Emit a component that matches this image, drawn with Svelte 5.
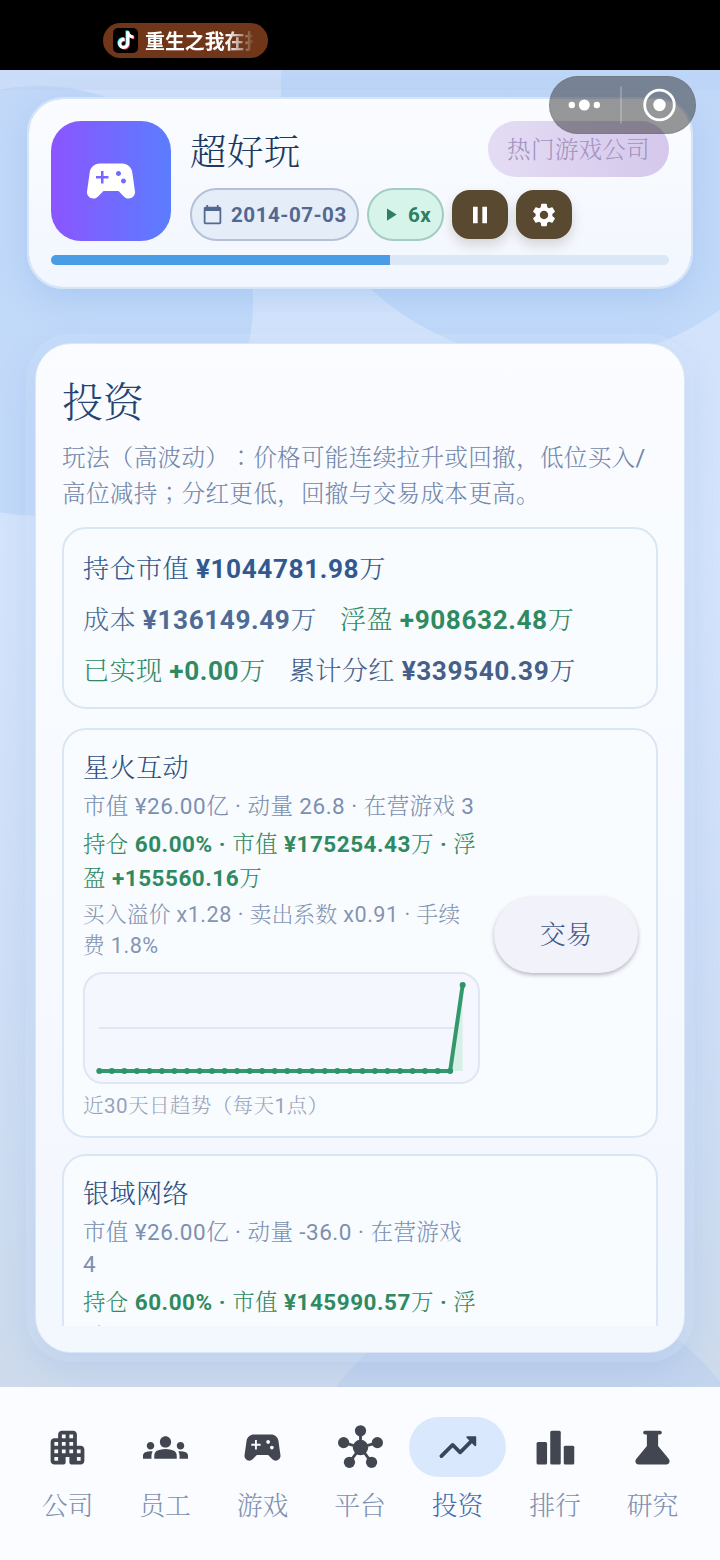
<script lang="ts">
  type Line = string;

  const progress = 54.8;

  const summary = [
    [{ label: '持仓市值', value: '¥1044781.98', tone: 'ink' }],
    [
      { label: '成本', value: '¥136149.49', tone: 'slate' },
      { label: '浮盈', value: '+908632.48', tone: 'gain' },
    ],
    [
      { label: '已实现', value: '+0.00', tone: 'gain' },
      { label: '累计分红', value: '¥339540.39', tone: 'steel' },
    ],
  ];

  const companies: { name: string; stats: Line[]; holding: Line[]; fees: Line[] }[] = [
    {
      name: '星火互动',
      stats: ['市值 ¥26.00亿 · 动量 26.8 · 在营游戏 3'],
      holding: ['持仓 60.00% · 市值 ¥175254.43万 · 浮', '盈 +155560.16万'],
      fees: ['买入溢价 x1.28 · 卖出系数 x0.91 · 手续', '费 1.8%'],
    },
    {
      name: '银域网络',
      stats: ['市值 ¥26.00亿 · 动量 -36.0 · 在营游戏', '4'],
      holding: ['持仓 60.00% · 市值 ¥145990.57万 · 浮', '盈 +126296.30万'],
      fees: ['买入溢价 x1.28 · 卖出系数 x0.91 · 手续', '费 1.8%'],
    },
  ];

  // 30 daily points, flat until today
  const points = Array.from({ length: 30 }, (_, i) => ({
    x: 14.3 + i * 12.53,
    y: i === 29 ? 11 : 97,
  }));
  const linePath = points.map((p) => `${p.x},${p.y}`).join(' ');

  const tabs = [
    { id: 'company', label: '公司' },
    { id: 'staff', label: '员工' },
    { id: 'games', label: '游戏' },
    { id: 'platform', label: '平台' },
    { id: 'invest', label: '投资' },
    { id: 'rank', label: '排行' },
    { id: 'research', label: '研究' },
  ];
  let active = $state('invest');

  const gamepad =
    'M21.58 16.09l-1.09-7.66C20.21 6.46 18.52 5 16.53 5H7.47C5.48 5 3.79 6.46 3.51 8.43l-1.09 7.66C2.2 17.63 3.39 19 4.94 19c.68 0 1.32-.27 1.8-.75L9 16h6l2.25 2.25c.48.48 1.13.75 1.8.75 1.56 0 2.75-1.37 2.53-2.91zM11 11H9v2H8v-2H6v-1h2V8h1v2h2v1zm4-1c-.55 0-1-.45-1-1s.45-1 1-1 1 .45 1 1-.45 1-1 1zm2 3c-.55 0-1-.45-1-1s.45-1 1-1 1 .45 1 1-.45 1-1 1z';
  const note =
    'M12.525.02c1.31-.02 2.61-.01 3.91-.02.08 1.53.63 3.09 1.75 4.17 1.12 1.11 2.7 1.62 4.24 1.79v4.03c-1.44-.05-2.89-.35-4.2-.97-.57-.26-1.1-.59-1.62-.93-.01 2.92.01 5.84-.02 8.75-.08 1.4-.54 2.79-1.35 3.94-1.31 1.92-3.58 3.17-5.91 3.21-1.43.08-2.86-.31-4.08-1.03-2.02-1.19-3.44-3.37-3.65-5.71-.02-.5-.03-1-.01-1.49.18-1.9 1.12-3.72 2.58-4.96 1.66-1.44 3.98-2.13 6.15-1.72.02 1.48-.04 2.96-.04 4.44-.99-.32-2.15-.23-3.02.37-.63.41-1.11 1.04-1.36 1.75-.21.51-.15 1.07-.14 1.61.24 1.64 1.82 3.02 3.5 2.87 1.12-.01 2.19-.66 2.77-1.61.19-.33.4-.67.41-1.06.1-1.79.06-3.57.07-5.36.01-4.03-.01-8.05.02-12.07z';

  // keeps Han runs light while latin digits follow the paragraph weight
  function runs(text: string) {
    return text.split(/([：；]|[\u3000-\u9fff\uff00-\uff19\uff1c-\uffef]+)/).filter(Boolean).map((t) => ({
      t,
      kind: /[：；]/.test(t) ? 'stop' : /[\u3000-\u9fff\uff00-\uffef]/.test(t) ? 'han' : 'latin',
    }));
  }
</script>

{#snippet mixed(lines: string[])}
  {#each lines as line}
    <span class="line">{#each runs(line) as r}<span class={r.kind}>{r.t}</span>{/each}</span>
  {/each}
{/snippet}

<div class="screen">
  <svg class="backdrop" viewBox="0 0 720 1560" aria-hidden="true">
    <circle class="blob" cx="38" cy="301" r="215" />
    <circle class="blob" cx="558" cy="85" r="277" />
    <circle class="blob low" cx="530" cy="1530" r="241" />
    <rect class="strip" x="0" y="70" width="720" height="20" />
  </svg>

  <div class="statusbar">
    <div class="live">
      <svg class="app" viewBox="0 0 25 25">
        <rect width="25" height="25" rx="5" fill="#000" />
        <g transform="translate(4 3.2) scale(.74)">
          <path d={note} fill="#25f4ee" transform="translate(-1 -.8)" />
          <path d={note} fill="#fe2c55" transform="translate(1 .8)" />
          <path d={note} fill="#fff" />
        </g>
      </svg>
      <span class="live-text">重生之我在打</span>
    </div>
  </div>

  <div class="capsule">
    <svg viewBox="0 0 147 58">
      <g fill="#fff">
        <circle cx="22.8" cy="29" r="3.2" />
        <circle cx="35.3" cy="29" r="5.5" />
        <circle cx="47.8" cy="29" r="3.2" />
        <circle cx="110.5" cy="29" r="6.2" />
      </g>
      <path d="M72 10.5v37" stroke="#fff" stroke-opacity=".28" stroke-width="1.6" />
      <circle cx="110.5" cy="29" r="14.8" fill="none" stroke="#fff" stroke-width="2.8" />
    </svg>
  </div>

  <header class="topcard">
    <div class="top-main">
      <div class="logo"><svg viewBox="0 0 24 24"><path d={gamepad} /></svg></div>
      <div class="info">
        <div class="name-row">
          <h1>超好玩</h1>
          <span class="tag">热门游戏公司</span>
        </div>
        <div class="chips">
          <span class="chip date">
            <svg viewBox="0 0 24 24"><path fill-rule="evenodd" d="M20 3h-1V1h-2v2H7V1H5v2H4c-1.1 0-2 .9-2 2v16c0 1.1.9 2 2 2h16c1.1 0 2-.9 2-2V5c0-1.1-.9-2-2-2zm0 18H4V8h16v13z" /></svg>
            2014-07-03
          </span>
          <span class="chip speed">
            <svg viewBox="0 0 24 24"><path d="M8 5v14l11-7z" /></svg>
            6x
          </span>
          <button class="ctl" aria-label="暂停"><svg viewBox="0 0 24 24"><path d="M6 19h4V5H6v14zm8-14v14h4V5h-4z" /></svg></button>
          <button class="ctl" aria-label="设置"><svg viewBox="0 0 24 24"><path d="M19.14 12.94c.04-.3.06-.61.06-.94 0-.32-.02-.64-.07-.94l2.03-1.58c.18-.14.23-.41.12-.61l-1.92-3.32c-.12-.22-.37-.29-.59-.22l-2.39.96c-.5-.38-1.03-.7-1.62-.94l-.36-2.54c-.04-.24-.24-.41-.48-.41h-3.84c-.24 0-.43.17-.47.41l-.36 2.54c-.59.24-1.13.57-1.62.94l-2.39-.96c-.22-.08-.47 0-.59.22L2.74 8.87c-.12.21-.08.47.12.61l2.03 1.58c-.05.3-.09.63-.09.94s.02.64.07.94l-2.03 1.58c-.18.14-.23.41-.12.61l1.92 3.32c.12.22.37.29.59.22l2.39-.96c.5.38 1.03.7 1.62.94l.36 2.54c.05.24.24.41.48.41h3.84c.24 0 .44-.17.47-.41l.36-2.54c.59-.24 1.13-.56 1.62-.94l2.39.96c.22.08.47 0 .59-.22l1.92-3.32c.12-.22.07-.47-.12-.61l-2.01-1.58zM12 15.6c-1.98 0-3.6-1.62-3.6-3.6s1.62-3.6 3.6-3.6 3.6 1.62 3.6 3.6-1.62 3.6-3.6 3.6z" /></svg></button>
        </div>
      </div>
    </div>
    <div class="track"><div class="bar" style="width: {progress}%"></div></div>
  </header>

  <main class="panel">
    <div class="scroll">
      <h2>投资</h2>
      <p class="hint">{@render mixed(['玩法（高波动）：价格可能连续拉升或回撤，低位买入/', '高位减持；分红更低，回撤与交易成本更高。'])}</p>

      <section class="box summary">
        {#each summary as row}
          <div class="sum-row">
            {#each row as item}
              <span class={item.tone}>{item.label} <b>{item.value}</b>万</span>
            {/each}
          </div>
        {/each}
      </section>

      {#each companies as c}
        <section class="box company">
          <div class="detail">
            <h3>{c.name}</h3>
            <p class="stats">{@render mixed(c.stats)}</p>
            <p class="holding">{@render mixed(c.holding)}</p>
            <p class="fees">{@render mixed(c.fees)}</p>
            <div class="chart">
              <svg viewBox="0 0 393 108">
                <path class="mid" d="M14 54H378" />
                <polygon class="area" points="{linePath} 377.7,97 14.3,97" />
                <polyline class="trend" points={linePath} />
                {#each points as p}<circle cx={p.x} cy={p.y} r="3" />{/each}
              </svg>
            </div>
            <p class="caption">{@render mixed(['近30天日趋势（每天1点）'])}</p>
          </div>
          <button class="trade">交易</button>
        </section>
      {/each}
    </div>
  </main>

  <nav>
    {#each tabs as tab}
      <button class="tab" class:active={active === tab.id} onclick={() => (active = tab.id)}>
        <span class="pill">
          <svg viewBox="0 0 24 24">
            {#if tab.id === 'company'}
              <path d="M17 11V5c0-1.1-.9-2-2-2H9c-1.1 0-2 .9-2 2v2H5c-1.1 0-2 .9-2 2v10c0 1.1.9 2 2 2h5c.55 0 1-.45 1-1v-3h2v3c0 .55.45 1 1 1h5c1.1 0 2-.9 2-2v-6c0-1.1-.9-2-2-2h-2zM7 19H5v-2h2v2zm0-4H5v-2h2v2zm0-4H5V9h2v2zm4 4H9v-2h2v2zm0-4H9V9h2v2zm0-4H9V5h2v2zm4 8h-2v-2h2v2zm0-4h-2V9h2v2zm0-4h-2V5h2v2zm4 12h-2v-2h2v2zm0-4h-2v-2h2v2z" />
            {:else if tab.id === 'staff'}
              <path d="M12 12.75c1.63 0 3.07.39 4.24.9 1.08.48 1.76 1.56 1.76 2.73V18H6v-1.61c0-1.18.68-2.26 1.76-2.73 1.17-.52 2.61-.91 4.24-.91zM4 13c1.1 0 2-.9 2-2s-.9-2-2-2-2 .9-2 2 .9 2 2 2zm1.13 1.1c-.37-.06-.74-.1-1.13-.1-.99 0-1.93.21-2.78.58C.48 14.9 0 15.62 0 16.43V18h4.5v-1.61c0-.83.23-1.61.63-2.29zM20 13c1.1 0 2-.9 2-2s-.9-2-2-2-2 .9-2 2 .9 2 2 2zm4 3.43c0-.81-.48-1.53-1.22-1.85-.85-.37-1.79-.58-2.78-.58-.39 0-.76.04-1.13.1.4.68.63 1.46.63 2.29V18H24v-1.57zM12 6c1.66 0 3 1.34 3 3s-1.34 3-3 3-3-1.34-3-3 1.34-3 3-3z" />
            {:else if tab.id === 'games'}
              <path d={gamepad} />
            {:else if tab.id === 'platform'}
              <path d="M12 12V3M12 12L3 9.4M12 12l9-2.6M12 12l-5.9 7.9M12 12l5.9 7.9" stroke="currentColor" stroke-width="1.5" />
              <circle cx="12" cy="12" r="4.1" />
              <circle cx="12" cy="3.1" r="3" />
              <circle cx="3" cy="9.4" r="3" />
              <circle cx="21" cy="9.4" r="3" />
              <circle cx="6.1" cy="19.9" r="3" />
              <circle cx="17.9" cy="19.9" r="3" />
            {:else if tab.id === 'invest'}
              <path d="M16.85 6.85l1.44 1.44-4.88 4.88-3.29-3.29c-.39-.39-1.02-.39-1.41 0l-6 6.01c-.39.39-.39 1.02 0 1.41s1.02.39 1.41 0L9.41 12l3.29 3.29c.39.39 1.02.39 1.41 0l5.59-5.58 1.44 1.44c.31.31.85.09.85-.35V6.5c.01-.28-.21-.5-.49-.5h-4.29c-.45 0-.67.54-.36.85z" />
            {:else if tab.id === 'rank'}
              <rect x="1.9" y="9" width="5.6" height="12" rx=".8" />
              <rect x="9.2" y="3" width="5.6" height="18" rx=".8" />
              <rect x="16.4" y="11" width="5.6" height="10" rx=".8" />
            {:else}
              <path d="M20.7 18.1L15 11.2V5h1c.55 0 1-.45 1-1s-.45-1-1-1H8c-.55 0-1 .45-1 1s.45 1 1 1h1v6.2l-5.7 6.9C2.4 19.3 3 21 4.6 21h14.8c1.6 0 2.2-1.7 1.3-2.9z" />
            {/if}
          </svg>
        </span>
        <span class="tab-label">{tab.label}</span>
      </button>
    {/each}
  </nav>
</div>

<style>
  :global(body) { margin: 0; background: #000; }

  .screen {
    position: relative;
    display: flex;
    flex-direction: column;
    width: 720px;
    height: 1560px;
    overflow: hidden;
    box-sizing: border-box;
    font-family: Roboto, 'Noto Serif CJK SC', 'Noto Sans CJK SC', sans-serif;
    font-weight: 300;
    letter-spacing: 0.3px;
    text-spacing-trim: space-all;
    background: linear-gradient(180deg, #d2e2fa 0%, #d5e4fc 35%, #cfdff7 60%, #cddcef 80%, #ced9e7 100%);
  }
  h1, h2, h3, p { margin: 0; font-weight: 300; }
  button { border: 0; padding: 0; font: inherit; letter-spacing: inherit; }
  svg { display: block; fill: currentColor; }

  .backdrop { position: absolute; inset: 0; width: 720px; height: 1560px; }
  .blob { fill: #a9cbf5; fill-opacity: 0.42; }
  .blob.low { fill: #b3cbf0; fill-opacity: 0.4; }
  .strip { fill: #b3cdee; fill-opacity: 0.25; }

  .statusbar { position: relative; flex: none; height: 70px; box-sizing: border-box; padding: 23px 0 0 103px; background: #000; }
  .live { display: flex; align-items: center; gap: 7px; box-sizing: border-box; width: 165px; height: 35px; padding: 0 15px 0 10px; border-radius: 18px; background: #70361a; }
  .app { flex: none; width: 25px; height: 25px; }
  .live-text { overflow: hidden; width: 108px; color: #fff; font-family: 'Noto Sans CJK SC', sans-serif; font-size: 19.9px; font-weight: 700; letter-spacing: 0; white-space: nowrap; line-height: 34px; mask-image: linear-gradient(90deg, #000 76%, transparent 102%); }

  .capsule { position: absolute; z-index: 2; left: 549px; top: 76px; width: 147px; height: 58px; border-radius: 29px; background: rgba(50, 50, 50, 0.5); box-shadow: inset 0 0 0 1px rgba(90, 90, 90, 0.2); }

  .topcard { position: relative; flex: none; box-sizing: border-box; height: 192px; margin: 27px 27px 0; padding: 22px 22px 0; border: 2px solid #d6e4f8; border-radius: 36px; background: linear-gradient(180deg, #fafcff, #f2f6fe); background-clip: padding-box; box-shadow: 0 10px 30px rgba(110, 160, 225, 0.28); }
  .top-main { display: flex; gap: 19px; }
  .logo { flex: none; display: grid; place-items: center; width: 120px; height: 120px; border-radius: 30px; background: linear-gradient(90deg, #8b55ff, #5b7dff); color: #fff; }
  .logo svg { width: 60px; height: 60px; }
  .info { flex: 1; min-width: 0; }
  .name-row { display: flex; justify-content: space-between; height: 56px; }
  h1 { color: #1c3a5f; font-size: 36.4px; line-height: 63px; letter-spacing: 0.5px; }
  .tag { box-sizing: border-box; width: 181px; height: 56px; border-radius: 28px; background: linear-gradient(90deg, #e4dcf4, #d5c8ec); color: #a393bf; font-size: 23.6px; line-height: 59px; text-align: center; letter-spacing: 0.2px; }
  .chips { display: flex; align-items: center; gap: 8px; margin-top: 11px; height: 53px; }
  .chip { display: flex; align-items: center; box-sizing: border-box; height: 53px; border: 2px solid; border-radius: 27px; font-size: 20.6px; font-weight: 700; letter-spacing: 0.5px; white-space: nowrap; }
  .date { width: 169px; padding-left: 10px; gap: 8px; border-color: #b4c1d6; background: #e5edf8; color: #53688f; }
  .speed { width: 77px; padding-left: 11px; gap: 7px; border-color: #a3ccc3; background: #d6f4e9; color: #2e7f66; }
  .chip svg { width: 21px; height: 21px; flex: none; }
  .ctl { display: grid; place-items: center; width: 56px; height: 49px; border-radius: 18px; background: #584930; color: #fff; box-shadow: 0 6px 12px rgba(90, 75, 50, 0.2); }
  .ctl svg { width: 28px; height: 28px; }
  .track { height: 10px; margin-top: 14px; border-radius: 5px; overflow: hidden; background: #dae7f6; }
  .bar { height: 100%; background: #489de6; }

  .panel { position: relative; flex: none; box-sizing: border-box; height: 1010px; margin: 54px 35px 0; padding: 26px; border: 1px solid #dbe7f8; border-radius: 36px; background: linear-gradient(180deg, #fafcff, #f3f7fe); box-shadow: 0 0 0 9px rgba(215, 230, 250, 0.25), 0 12px 34px 4px rgba(120, 160, 225, 0.24); }
  .scroll { height: 956px; overflow: hidden; }
  .line { display: block; white-space: pre; }
  .latin { letter-spacing: 0.52px; }
  .han { font-weight: 300; }
  /* full-width colon and semicolon sit centred in their box */
  .stop { font-family: 'Noto Serif CJK JP', 'Noto Sans CJK JP', sans-serif; font-weight: 300; line-height: 0; }
  h2 { height: 64px; color: #254470; font-size: 41px; line-height: 66px; letter-spacing: 0; }
  .hint { margin-top: 6px; color: #7287a9; font-size: 23.6px; font-weight: 400; line-height: 36px; }

  .box { box-sizing: border-box; border: 2px solid #dbe6f4; border-radius: 24px; background: #f9fcff; }
  .summary { height: 182px; margin-top: 15px; padding: 15px 19px; }
  .sum-row { display: flex; gap: 23px; height: 51px; font-size: 26.2px; line-height: 51px; letter-spacing: 0.35px; white-space: pre; }
  .sum-row b { font-weight: 700; letter-spacing: 0.58px; }
  .ink { color: #31588f; }
  .slate { color: #4f6b95; }
  .steel { color: #465f88; }
  .gain { color: #2f8a62; }

  .company { display: flex; align-items: center; justify-content: space-between; margin-top: 19px; padding: 18px 18px 14px 19px; }
  .company + .company { margin-top: 16px; }
  .detail { width: 397px; }
  h3 { height: 41px; color: #2d4d7c; font-size: 26.2px; line-height: 41px; letter-spacing: 0.3px; }
  .stats { margin-top: 1px; color: #7c8fb0; font-size: 22.5px; font-weight: 400; line-height: 32px; }
  .holding { margin-top: 5px; color: #2f8a62; font-size: 22.5px; font-weight: 700; line-height: 34px; }
  .fees { margin-top: 3.5px; color: #8494b2; font-size: 21.6px; font-weight: 400; line-height: 31.5px; }
  .chart { box-sizing: border-box; width: 397px; height: 112px; margin-top: 10.5px; border: 2px solid #dfe6f4; border-radius: 20px; background: #f4f7fe; }
  .mid { stroke: #dfe6f4; stroke-width: 2; }
  .chart circle { fill: #2d9468; }
  .trend { fill: none; stroke: #33996c; stroke-width: 4; stroke-linejoin: round; }
  .area { fill: #d8efe8; }
  .caption { margin-top: 6px; color: #98a2b8; font-size: 20.6px; font-weight: 400; line-height: 32px; }
  .trade { flex: none; width: 144px; height: 76px; border-radius: 38px; background: #f2f3fa; color: #435a8b; font-size: 26px; line-height: 74px; box-shadow: 0 2px 4px rgba(60, 60, 80, 0.36); }

  nav { position: relative; flex: none; display: grid; grid-template-columns: repeat(7, 97.5px); justify-content: center; height: 173px; margin-top: 34px; background: #fafcff; }
  .tab { display: flex; flex-direction: column; align-items: center; padding-top: 30px; background: none; color: #424650; }
  .pill { display: grid; place-items: center; width: 97.5px; height: 60px; border-radius: 30px; }
  .pill svg { width: 45px; height: 45px; overflow: visible; }
  .tab-label { margin-top: 10px; color: #7f90ae; font-size: 25.8px; line-height: 38px; letter-spacing: 0; }
  .active { color: #38465c; }
  .active .pill { background: #dae8fe; }
  .active .tab-label { color: #3f6cb0; }
</style>
